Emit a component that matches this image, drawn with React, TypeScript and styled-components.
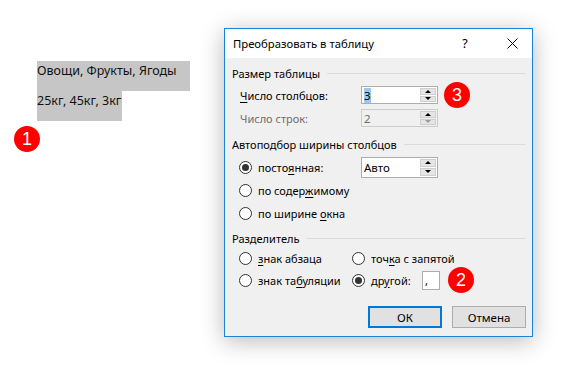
import React from "react";
import styled, { createGlobalStyle } from "styled-components";

const GlobalStyle = createGlobalStyle`
  html, body {
    margin: 0;
    padding: 0;
    background: #ffffff;
  }
  body {
    width: 584px;
    height: 370px;
    overflow: hidden;
    font-family: "Noto Sans", "Open Sans", sans-serif;
  }
`;

const Page = styled.div`
  display: flex;
  align-items: flex-start;
  width: 584px;
  height: 370px;
`;

const Doc = styled.div`
  width: 224px;
  padding-top: 61px;
  display: flex;
  flex-direction: column;
  align-items: flex-start;
`;

const Para = styled.div<{ $extra: number }>`
  margin-left: 37px;
  height: 30px;
  padding-right: ${(p) => p.$extra}px;
  background: #c6c6c6;
  font-size: 12.5px;
  line-height: 20px;
  color: #111;
  white-space: nowrap;
`;

const Badge = styled.span<{ $ml?: number; $mt?: number }>`
  flex: none;
  width: 26px;
  height: 26px;
  border-radius: 50%;
  background: #ff0000;
  color: #ffffff;
  display: flex;
  align-items: center;
  justify-content: center;
  font-family: "Liberation Sans", Arial, sans-serif;
  font-size: 18px;
  margin-left: ${(p) => p.$ml ?? 0}px;
  margin-top: ${(p) => p.$mt ?? 0}px;
`;

const Dialog = styled.div`
  margin-top: 28px;
  width: 309px;
  height: 309px;
  box-sizing: border-box;
  border: 1px solid #1883d7;
  background: #f0f0f0;
  box-shadow: 0 4px 22px rgba(0, 0, 0, 0.28);
  display: flex;
  flex-direction: column;
  font-size: 11px;
  color: #000;
`;

const TitleBar = styled.div`
  height: 29px;
  background: #ffffff;
  display: flex;
  align-items: center;
  padding-left: 8px;
  font-size: 11.3px;
`;

const TitleText = styled.span`
  flex: 1;
`;

const TitleButton = styled.span<{ $w: number }>`
  width: ${(p) => p.$w}px;
  height: 29px;
  display: flex;
  align-items: center;
  justify-content: center;
  font-size: 12.5px;
`;

const Body = styled.div`
  flex: 1;
  display: flex;
  flex-direction: column;
  padding: 8px 6px 0 7px;
`;

const GroupHeader = styled.div<{ $mt?: number }>`
  display: flex;
  align-items: center;
  gap: 7px;
  height: 15px;
  margin-top: ${(p) => p.$mt ?? 0}px;
  white-space: nowrap;
  &::after {
    content: "";
    flex: 1;
    height: 1px;
    background: #dcdcdc;
  }
`;

const FieldRow = styled.div<{ $mt: number; $h: number }>`
  display: flex;
  align-items: center;
  height: ${(p) => p.$h}px;
  margin-top: ${(p) => p.$mt}px;
  padding-left: 8px;
`;

const Label = styled.span<{ $disabled?: boolean }>`
  flex: none;
  width: 121px;
  color: ${(p) => (p.$disabled ? "#6d6d6d" : "#000")};
`;

const Input = styled.div<{ $w: number; $h: number; $disabled?: boolean }>`
  flex: none;
  box-sizing: border-box;
  width: ${(p) => p.$w}px;
  height: ${(p) => p.$h}px;
  border: 1px solid ${(p) => (p.$disabled ? "#cccccc" : "#adadad")};
  background: ${(p) => (p.$disabled ? "#f0f0f0" : "#ffffff")};
  color: ${(p) => (p.$disabled ? "#6d6d6d" : "#000")};
  display: flex;
  align-items: center;
  padding-left: 2px;
`;

const InputText = styled.span`
  flex: 1;
  font-size: 11.5px;
`;

const Selected = styled.span`
  background: #99c9ef;
`;

const Spinner = styled.span`
  width: 16px;
  align-self: stretch;
  display: flex;
  flex-direction: column;
  gap: 1px;
  padding: 1px 1px 1px 0;
`;

const SpinBtn = styled.span<{ $down?: boolean; $dim?: boolean }>`
  flex: 1;
  background: #e5e5e5;
  border: 1px solid #cfcfcf;
  display: flex;
  align-items: center;
  justify-content: center;
  &::before {
    content: "";
    border-left: 3px solid transparent;
    border-right: 3px solid transparent;
    ${(p) =>
      p.$down
        ? `border-top: 3px solid ${p.$dim ? "#9a9a9a" : "#000"};`
        : `border-bottom: 3px solid ${p.$dim ? "#9a9a9a" : "#000"};`}
  }
`;

const RadioList = styled.div`
  display: flex;
  flex-direction: column;
  gap: 1px;
  margin-top: 4px;
`;

const RadioGrid = styled.div`
  display: grid;
  grid-template-columns: 120px auto;
  grid-auto-rows: 22px;
  margin-top: 1px;
`;

const RadioRow = styled.div<{ $indent?: number }>`
  display: flex;
  align-items: center;
  height: 22px;
  padding-left: ${(p) => p.$indent ?? 7}px;
  white-space: nowrap;
`;

const RadioCircle = styled.span<{ $checked?: boolean }>`
  flex: none;
  box-sizing: border-box;
  width: 13px;
  height: 13px;
  border-radius: 50%;
  border: 1px solid #333;
  background: #fff;
  margin-right: 6px;
  display: flex;
  align-items: center;
  justify-content: center;
  &::after {
    content: "";
    width: 7px;
    height: 7px;
    border-radius: 50%;
    background: ${(p) => (p.$checked ? "#333" : "transparent")};
  }
`;

const RadioText = styled.span<{ $w?: number }>`
  flex: none;
  display: inline-block;
  width: ${(p) => (p.$w ? `${p.$w}px` : "auto")};
`;

const U = styled.span`
  text-decoration: underline;
  text-underline-offset: 2px;
`;

const Buttons = styled.div`
  display: flex;
  justify-content: flex-end;
  gap: 10px;
  margin-top: 15px;
`;

const Button = styled.div<{ $default?: boolean }>`
  box-sizing: border-box;
  width: 74px;
  height: 22px;
  background: #e1e1e1;
  border: ${(p) => (p.$default ? "2px solid #0078d7" : "1px solid #adadad")};
  display: flex;
  align-items: center;
  justify-content: center;
  font-size: 11.5px;
`;

const Spin = ({ dim }: { dim?: boolean }) => (
  <Spinner>
    <SpinBtn />
    <SpinBtn $down $dim={dim} />
  </Spinner>
);

const CloseIcon = () => (
  <svg width="11" height="11" viewBox="0 0 11 11">
    <path d="M0.5 0.5 L10.5 10.5 M10.5 0.5 L0.5 10.5" stroke="#000" strokeWidth="1" />
  </svg>
);

export default function App() {
  return (
    <>
      <GlobalStyle />
      <Page>
        <Doc>
          <Para $extra={13}>Овощи, Фрукты, Ягоды</Para>
          <Para $extra={1}>25кг, 45кг, 3кг</Para>
          <Badge $ml={14} $mt={5}>1</Badge>
        </Doc>
        <Dialog>
          <TitleBar>
            <TitleText>Преобразовать в таблицу</TitleText>
            <TitleButton $w={40}>?</TitleButton>
            <TitleButton $w={7} />
            <TitleButton $w={40}>
              <CloseIcon />
            </TitleButton>
          </TitleBar>
          <Body>
            <GroupHeader>Размер таблицы</GroupHeader>
            <FieldRow $mt={5} $h={18}>
              <Label>
                <U>Ч</U>исло столбцов:
              </Label>
              <Input $w={77} $h={18}>
                <InputText>
                  <Selected>3</Selected>
                </InputText>
                <Spin />
              </Input>
              <Badge $ml={6}>3</Badge>
            </FieldRow>
            <FieldRow $mt={5} $h={18}>
              <Label $disabled>Число строк:</Label>
              <Input $w={77} $h={18} $disabled>
                <InputText>2</InputText>
                <Spin dim />
              </Input>
            </FieldRow>

            <GroupHeader $mt={10}>Автоподбор ширины столбцов</GroupHeader>
            <RadioList>
              <RadioRow>
                <RadioCircle $checked />
                <RadioText $w={103}>
                  посто<U>я</U>нная:
                </RadioText>
                <Input $w={77} $h={21}>
                  <InputText>Авто</InputText>
                  <Spin />
                </Input>
              </RadioRow>
              <RadioRow>
                <RadioCircle />
                <RadioText>
                  по содер<U>ж</U>имому
                </RadioText>
              </RadioRow>
              <RadioRow>
                <RadioCircle />
                <RadioText>
                  по ширине <U>о</U>кна
                </RadioText>
              </RadioRow>
            </RadioList>

            <GroupHeader $mt={7}>Разделитель</GroupHeader>
            <RadioGrid>
              <RadioRow>
                <RadioCircle />
                <RadioText>
                  <U>з</U>нак абзаца
                </RadioText>
              </RadioRow>
              <RadioRow $indent={0}>
                <RadioCircle />
                <RadioText>
                  точ<U>к</U>а с запятой
                </RadioText>
              </RadioRow>
              <RadioRow>
                <RadioCircle />
                <RadioText>
                  знак та<U>б</U>уляции
                </RadioText>
              </RadioRow>
              <RadioRow $indent={0}>
                <RadioCircle $checked />
                <RadioText $w={51}>
                  др<U>у</U>гой:
                </RadioText>
                <Input $w={18} $h={19}>
                  <InputText>,</InputText>
                </Input>
                <Badge $ml={8}>2</Badge>
              </RadioRow>
            </RadioGrid>

            <Buttons>
              <Button $default>ОК</Button>
              <Button>Отмена</Button>
            </Buttons>
          </Body>
        </Dialog>
      </Page>
    </>
  );
}
